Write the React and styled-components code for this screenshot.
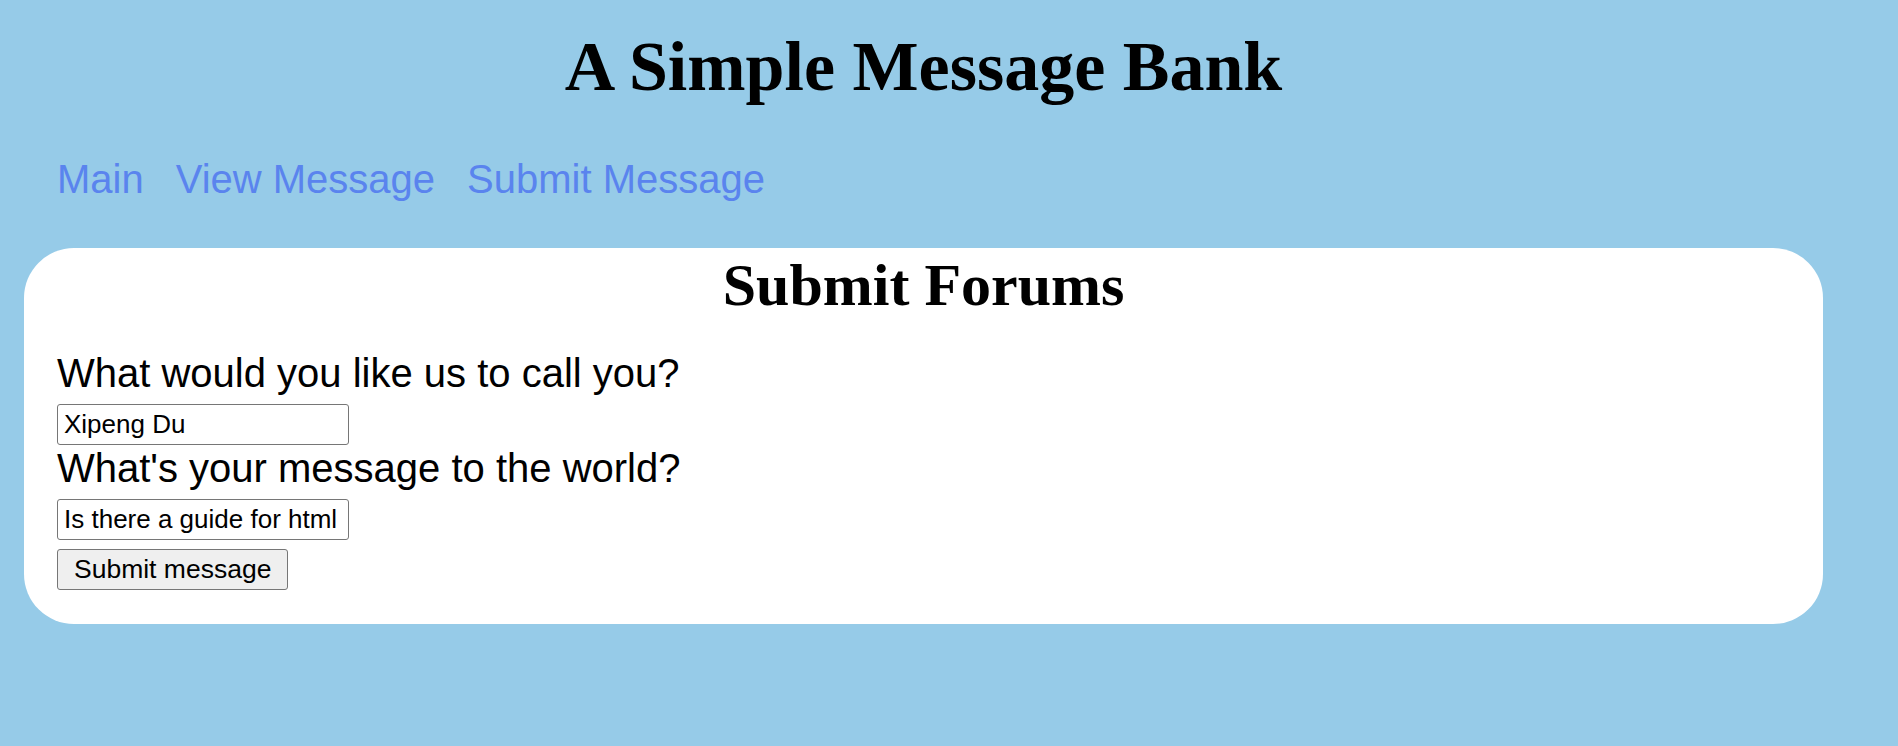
import styled, { createGlobalStyle } from "styled-components";

const GlobalStyle = createGlobalStyle`
  body {
    margin: 0;
    background-color: #96cbe8;
  }
`;

const StyledPage = styled.div`
  min-height: 100vh;
  box-sizing: border-box;
  padding: 27px 0 0 24px;
  background-color: #96cbe8;
`;

const StyledColumn = styled.div`
  width: 1799px;
  display: flex;
  flex-direction: column;
`;

const StyledTitle = styled.h1`
  margin: 0;
  font-family: "Liberation Serif", "Times New Roman", serif;
  font-weight: bold;
  font-size: 70px;
  line-height: 80px;
  text-align: center;
  color: #000;
`;

const StyledNav = styled.nav`
  display: flex;
  gap: 32px;
  margin-top: 49px;
  padding-left: 33px;
`;

const StyledNavLink = styled.a`
  font-family: "Liberation Sans", Arial, sans-serif;
  font-size: 40px;
  line-height: 46px;
  color: #5a84ee;
  text-decoration: none;
`;

const StyledCard = styled.section`
  margin-top: 46px;
  padding: 4px 33px 34px;
  background-color: #fff;
  border-radius: 50px;
`;

const StyledCardTitle = styled.h2`
  margin: 0;
  font-family: "Liberation Serif", "Times New Roman", serif;
  font-weight: bold;
  font-size: 60px;
  line-height: 66px;
  text-align: center;
  color: #000;
`;

const StyledForm = styled.form`
  display: flex;
  flex-direction: column;
  align-items: flex-start;
  margin-top: 32px;
`;

const StyledLabel = styled.label`
  font-family: "Liberation Sans", Arial, sans-serif;
  font-size: 40px;
  line-height: 46px;
  color: #000;
`;

const StyledInput = styled.input`
  box-sizing: border-box;
  width: 292px;
  height: 41px;
  margin: 8px 0 0;
  padding: 0 6px;
  font-family: "Liberation Sans", Arial, sans-serif;
  font-size: 26px;
  color: #000;
  background: #fff;
  border: 1px solid #767676;
  border-radius: 3px;
`;

const StyledButton = styled.button`
  box-sizing: border-box;
  height: 41px;
  margin-top: 9px;
  padding: 0 16px;
  font-family: "Liberation Sans", Arial, sans-serif;
  font-size: 26.5px;
  color: #000;
  background-color: #efefef;
  border: 1px solid #767676;
  border-radius: 3px;
`;

const links = ["Main", "View Message", "Submit Message"];

export default function App() {
  return (
    <>
      <GlobalStyle />
      <StyledPage>
        <StyledColumn>
          <StyledTitle>A Simple Message Bank</StyledTitle>
          <StyledNav>
            {links.map((link) => (
              <StyledNavLink key={link} href="#">
                {link}
              </StyledNavLink>
            ))}
          </StyledNav>
          <StyledCard>
            <StyledCardTitle>Submit Forums</StyledCardTitle>
            <StyledForm onSubmit={(e) => e.preventDefault()}>
              <StyledLabel htmlFor="name">What would you like us to call you?</StyledLabel>
              <StyledInput id="name" type="text" defaultValue="Xipeng Du" />
              <StyledLabel htmlFor="message">What's your message to the world?</StyledLabel>
              <StyledInput
                id="message"
                type="text"
                defaultValue="Is there a guide for html and css?"
              />
              <StyledButton type="submit">Submit message</StyledButton>
            </StyledForm>
          </StyledCard>
        </StyledColumn>
      </StyledPage>
    </>
  );
}
